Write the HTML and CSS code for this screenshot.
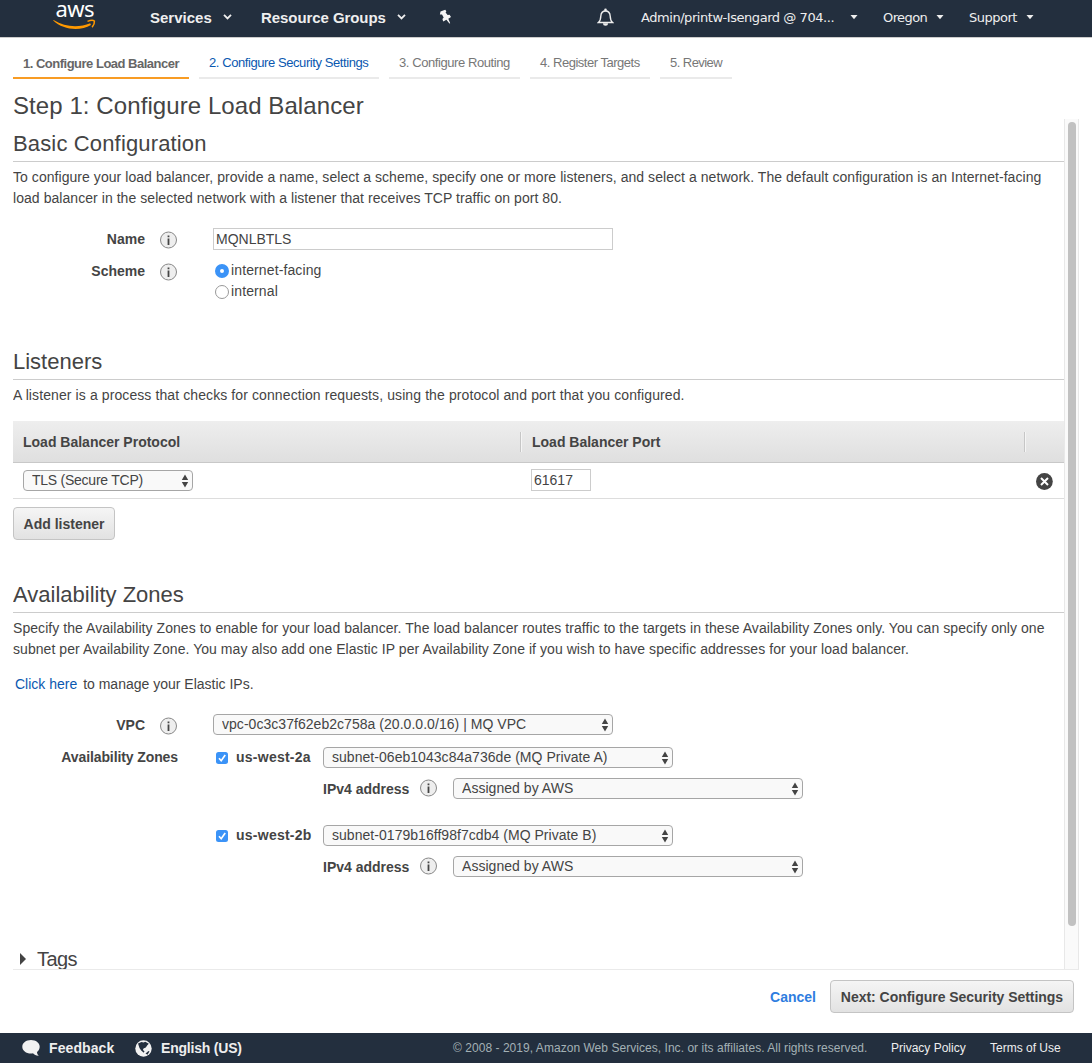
FILE: index.html
```
<!DOCTYPE html>
<html lang="en">
<head>
  <meta charset="UTF-8">
  <title>Create Load Balancer</title>
  <link rel="stylesheet" href="styles.css">
</head>
<body>

<!-- shared icons -->
<svg class="defs" width="0" height="0">
  <symbol id="info" viewBox="0 0 18 18">
    <circle cx="8.500" cy="9" r="8" fill="#eee" stroke="#888" stroke-width="1"/>
    <path d="M7.600 4.400h1.800v1.800H7.600zM7.600 7.400h1.800v6.600H7.600z" fill="#444"/>
  </symbol>
  <symbol id="arrows" viewBox="0 0 8 14">
    <path d="M4 .5L7.2 6H.8zM4 13.5L.8 8h6.4z" fill="#444"/>
  </symbol>
</svg>

<header class="topbar">
  <svg class="aws" width="46" height="34" viewBox="0 0 46 34">
    <text class="aws-text" x="2.500" y="17.200">aws</text>
    <path d="M.2 20.500C10 30 27 31.500 38 25l-.8-1.800C26 28 12 27.300.6 20z" fill="#f90"/>
    <path d="M34.500 21.400c2.500-1 5.800-1.200 6.900-.4.3 2-.9 4.500-2.300 6.300" fill="none" stroke="#f90" stroke-width="1.500"/>
  </svg>
  <span class="menu services">Services</span>
  <svg class="caret thin" width="9" height="6" viewBox="0 0 9 6"><path d="M1 .8l3.500 3.600L8 .8" fill="none" stroke="#eee" stroke-width="1.8"/></svg>
  <span class="menu groups">Resource Groups</span>
  <svg class="caret thin" width="9" height="6" viewBox="0 0 9 6"><path d="M1 .8l3.500 3.600L8 .8" fill="none" stroke="#eee" stroke-width="1.8"/></svg>
  <svg class="pin" width="13" height="16" viewBox="0 0 13 16"><path d="M1.500 2.500L6.200.8l1.200 1.500-.8 1.200 2 2.500 2-.2 1.400 2.200-2.700 1.800 1.900 4.400-.8.300-3-3.800-3.200 1.700-.8-2.300 1.300-1.600L3 5.500.9 5.400z" fill="#f5f5f5"/></svg>
  <svg class="bell" width="17" height="19" viewBox="0 0 17 19">
    <path d="M1.400 14.500c2-1.600 2.300-3.400 2.400-6.300C4 5 5.700 3 8.500 3s4.500 2 4.700 5.200c.1 2.900.4 4.700 2.400 6.300z" fill="none" stroke="#eee" stroke-width="1.400"/>
    <circle cx="8.500" cy="1.900" r="1.300" fill="#eee"/><path d="M6 15.300h5a2.500 2.500 0 0 1-5 0" fill="#eee"/>
  </svg>
  <span class="account user">Admin/printw-Isengard @ 704...</span>
  <svg class="caret" width="8" height="5" viewBox="0 0 8 5"><path d="M.5 0h7L4 4.200z" fill="#eee"/></svg>
  <span class="account region">Oregon</span>
  <svg class="caret" width="8" height="5" viewBox="0 0 8 5"><path d="M.5 0h7L4 4.200z" fill="#eee"/></svg>
  <span class="account support">Support</span>
  <svg class="caret" width="8" height="5" viewBox="0 0 8 5"><path d="M.5 0h7L4 4.200z" fill="#eee"/></svg>
</header>

<nav class="steps">
  <span class="step step-1 active">1. Configure Load Balancer</span>
  <a class="step step-2 link">2. Configure Security Settings</a>
  <span class="step step-3">3. Configure Routing</span>
  <span class="step step-4">4. Register Targets</span>
  <span class="step step-5">5. Review</span>
</nav>

<h1>Step 1: Configure Load Balancer</h1>

<main class="wizard">
  <div class="panel">
    <section class="basic">
      <h2>Basic Configuration</h2>
      <p class="desc">To configure your load balancer, provide a name, select a scheme, specify one or more listeners, and select a network. The default configuration is an Internet-facing<br>load balancer in the selected network with a listener that receives TCP traffic on port 80.</p>
      <div class="row name-row">
        <label>Name</label>
        <svg class="info" width="18" height="18"><use href="#info"/></svg>
        <input class="text name-input" type="text" value="MQNLBTLS">
      </div>
      <div class="row scheme-row">
        <label>Scheme</label>
        <svg class="info" width="18" height="18"><use href="#info"/></svg>
        <div class="radios">
          <div class="radio"><i class="dot on"></i>internet-facing</div>
          <div class="radio"><i class="dot"></i>internal</div>
        </div>
      </div>
    </section>

    <section class="listeners">
      <h2>Listeners</h2>
      <p class="desc">A listener is a process that checks for connection requests, using the protocol and port that you configured.</p>
      <div class="table">
        <div class="thead">
          <span>Load Balancer Protocol</span>
          <span class="sep">Load Balancer Port</span>
          <span class="sep"></span>
        </div>
        <div class="trow">
          <div class="select w170"><select class="protocol"><option>TLS (Secure TCP)</option></select><svg width="8" height="14"><use href="#arrows"/></svg></div>
          <input class="text port" type="text" value="61617">
          <svg class="remove" width="18" height="18" viewBox="0 0 18 18"><circle cx="9.400" cy="9.500" r="8.400" fill="#444"/><path d="M6 6l7 7m0-7l-7 7" stroke="#fff" stroke-width="2"/></svg>
        </div>
      </div>
      <button class="btn add">Add listener</button>
    </section>

    <section class="zones">
      <h2>Availability Zones</h2>
      <p class="desc">Specify the Availability Zones to enable for your load balancer. The load balancer routes traffic to the targets in these Availability Zones only. You can specify only one<br>subnet per Availability Zone. You may also add one Elastic IP per Availability Zone if you wish to have specific addresses for your load balancer.</p>
      <p class="eip"><a class="link">Click here</a> to manage your Elastic IPs.</p>
      <div class="row vpc-row">
        <label>VPC</label>
        <svg class="info" width="18" height="18"><use href="#info"/></svg>
        <div class="select w400"><select class="vpc"><option>vpc-0c3c37f62eb2c758a (20.0.0.0/16) | MQ VPC</option></select><svg width="8" height="14"><use href="#arrows"/></svg></div>
      </div>
      <div class="row zone-row">
        <label class="wide">Availability Zones</label>
        <div class="zone-list">
          <div class="zone">
            <svg class="check" width="12" height="12" viewBox="0 0 12 12"><rect width="12" height="12" rx="2.500" fill="#3b93f7"/><path d="M3 6.200l2.200 2.500L9.200 3" fill="none" stroke="#fff" stroke-width="1.700"/></svg>
            <b class="zone-name">us-west-2a</b>
            <div class="select w350"><select><option>subnet-06eb1043c84a736de (MQ Private A)</option></select><svg width="8" height="14"><use href="#arrows"/></svg></div>
          </div>
          <div class="ip">
            <b>IPv4 address</b>
            <svg class="ip-info" width="18" height="18"><use href="#info"/></svg>
            <div class="select w350"><select><option>Assigned by AWS</option></select><svg width="8" height="14"><use href="#arrows"/></svg></div>
          </div>
          <div class="zone">
            <svg class="check" width="12" height="12" viewBox="0 0 12 12"><rect width="12" height="12" rx="2.500" fill="#3b93f7"/><path d="M3 6.200l2.200 2.500L9.200 3" fill="none" stroke="#fff" stroke-width="1.700"/></svg>
            <b class="zone-name">us-west-2b</b>
            <div class="select w350"><select><option>subnet-0179b16ff98f7cdb4 (MQ Private B)</option></select><svg width="8" height="14"><use href="#arrows"/></svg></div>
          </div>
          <div class="ip">
            <b>IPv4 address</b>
            <svg class="ip-info" width="18" height="18"><use href="#info"/></svg>
            <div class="select w350"><select><option>Assigned by AWS</option></select><svg width="8" height="14"><use href="#arrows"/></svg></div>
          </div>
        </div>
      </div>
    </section>

    <div class="tags">
      <svg width="7" height="12" viewBox="0 0 7 12"><path d="M0 0l6 6-6 6z" fill="#444"/></svg>
      <span>Tags</span>
    </div>
  </div>
  <div class="track"><div class="thumb"></div></div>
</main>

<div class="actions">
  <a class="cancel">Cancel</a>
  <button class="btn next">Next: Configure Security Settings</button>
</div>

<footer class="footer">
  <svg width="18" height="17" viewBox="0 0 18 17"><path d="M9 0c5 0 8.700 2.900 8.700 6.700 0 2.300-1.100 4-2.700 5.200.1 1.700.7 2.900 1.800 3.800-2.500.1-4.500-.8-5.800-2.400-.6.100-1.300.2-2 .2C4 13.500.3 10.500.3 6.700.3 2.900 4 0 9 0z" fill="#f2f2f2"/></svg>
  <b class="feedback">Feedback</b>
  <svg width="17" height="17" viewBox="0 0 17 17"><circle cx="8.500" cy="8.500" r="8.200" fill="#f2f2f2"/><path d="M3 3.500L6.500 2l2 .6 1.800-.8 3.500 2-1.500 1.500-1.500 2.300-2.300 1-.6 1.500 1.600 1.200-.8 1.500-2.500-2.300L4.500 8z" fill="#232f3e"/><path d="M10.500 13.500l3-2.500 1 .5-2 3.300z" fill="#232f3e"/></svg>
  <b class="language">English (US)</b>
  <span class="copy">© 2008 - 2019, Amazon Web Services, Inc. or its affiliates. All rights reserved.</span>
  <span class="privacy">Privacy Policy</span>
  <span class="terms">Terms of Use</span>
</footer>

</body>
</html>
```
FILE: styles.css
```
* {
  box-sizing: border-box;
}

body {
  margin: 0;
  height: 1063px;
  overflow: hidden;
  display: flex;
  flex-direction: column;
  background: #fff;
  color: #444;
  font: 14px/21px "Liberation Sans", Arial, sans-serif;
  white-space: nowrap;
}

svg {
  flex: none;
}

.defs {
  display: none;
}

.link {
  color: #0a58b0;
}

/* top navigation */
.topbar {
  display: flex;
  align-items: center;
  flex: none;
  height: 38px;
  padding: 0 0 3px 53px;
  background: #232f3e;
  border-bottom: 1px solid #ccc;
  color: #eee;
}

.aws {
  overflow: visible;
}

.aws-text {
  font: 22px "Noto Sans", sans-serif;
  letter-spacing: -0.6px;
  fill: #fff;
}

.menu {
  font-size: 15px;
  font-weight: bold;
}

.services {
  width: 63px;
  margin-left: 51px;
}

.groups {
  width: 126px;
  margin-left: 28px;
  letter-spacing: -0.07px;
}

.caret.thin {
  margin-left: 10px;
}

.services + .caret {
  margin-right: 1px;
}

.pin {
  margin-left: 33px;
}

.bell {
  margin-left: 145px;
}

.account {
  font: 13px "DejaVu Sans", Verdana, sans-serif;
}

.user {
  width: 194px;
  margin-left: 27px;
  letter-spacing: -0.45px;
}

.region {
  width: 45px;
  margin-left: 25px;
  letter-spacing: -0.6px;
}

.support {
  width: 49px;
  margin-left: 25px;
  letter-spacing: -0.5px;
}

.caret {
  margin-left: 8px;
}

.user + .caret {
  margin-left: 15px;
}

/* wizard steps */
.steps {
  display: flex;
  gap: 10px;
  flex: none;
  height: 41px;
  padding-left: 13px;
}

.step {
  padding: 14px 0 0 10px;
  border-bottom: 2px solid #eaeaea;
  font-size: 13px;
  letter-spacing: -0.42px;
  color: #777;
}

.step.link {
  color: #0a58b0;
}

.step.active {
  padding-top: 15px;
  border-color: #f89c24;
  font-weight: bold;
  color: #666;
}

.step-1 {
  width: 176px;
  letter-spacing: -0.5px;
}

.step-2 {
  width: 180px;
}

.step-3 {
  width: 131px;
}

.step-4 {
  width: 120px;
  letter-spacing: -0.48px;
}

.step-5 {
  width: 72px;
  letter-spacing: -0.55px;
}

h1 {
  flex: none;
  height: 40px;
  margin: 0;
  padding: 12px 0 0 13px;
  font-size: 24px;
  font-weight: normal;
  line-height: 29px;
  letter-spacing: 0.08px;
}

.wizard {
  display: flex;
  flex: none;
  width: 1066px;
  height: 851px;
  margin-left: 13px;
  border-bottom: 1px solid #eaeaea;
}

.panel {
  flex: none;
  width: 1051px;
  overflow: hidden;
}

.track {
  width: 15px;
  padding: 3px 0 0 3px;
  background: #fafafa;
  border: solid #e8e8e8;
  border-width: 0 1px;
}

.thumb {
  width: 8px;
  height: 804px;
  border-radius: 4px;
  background: #c1c1c1;
}

section h2 {
  height: 43px;
  margin: 0;
  padding-top: 11px;
  border-bottom: 1px solid #ccc;
  font-size: 22px;
  font-weight: normal;
  line-height: 27px;
}

.basic {
  height: 218px;
}

.basic h2 {
  letter-spacing: 0.15px;
}

.listeners {
  height: 233px;
}

.zones {
  height: 370px;
}

.desc {
  margin: 5px 0 0;
  letter-spacing: 0.055px;
}

.listeners .desc {
  letter-spacing: 0.1px;
}

.row {
  display: flex;
}

label {
  width: 132px;
  font-weight: bold;
  text-align: right;
}

label.wide {
  width: 165px;
  letter-spacing: -0.1px;
}

.info {
  margin: 2px 35px 0 15px;
}

.text {
  height: 22px;
  padding: 0 2px;
  border: 1px solid #ccc;
  background: #fff;
  color: #444;
  font: inherit;
}

.name-row {
  margin-top: 19px;
}

.name-row label {
  margin-top: 1px;
}

.name-row .info {
  margin-top: 3px;
}

.name-input {
  width: 400px;
}

.scheme-row {
  margin-top: 11px;
}

.radio {
  display: flex;
  align-items: center;
  letter-spacing: 0.12px;
}

.radios {
  margin-top: -1px;
}

.dot {
  width: 14px;
  height: 14px;
  margin: 1px 2px 0;
  border: 1px solid #999;
  border-radius: 50%;
}

.dot.on {
  border: 5px solid #3b93f7;
  background: #fff;
}

/* listeners table */
.table {
  margin-top: 15px;
}

.thead {
  display: grid;
  grid-template-columns: 497px 504px 1fr;
  align-items: center;
  height: 42px;
  padding-left: 10px;
  background: linear-gradient(#eee, #dfdfdf);
  border-bottom: 1px solid #c8c8c8;
  font-weight: bold;
}

.thead span {
  height: 20px;
}

.thead .sep {
  padding-left: 11px;
  border-left: 1px solid #c6c6c6;
  box-shadow: inset 1px 0 #f5f5f5;
}

.trow {
  display: flex;
  align-items: center;
  height: 36px;
  padding-left: 10px;
  border-bottom: 1px solid #ddd;
}

.port {
  width: 60px;
  margin: 0 0 2px 338px;
}

.remove {
  margin: 1px 0 0 444px;
}

.select {
  display: grid;
  align-items: center;
  flex: none;
}

.select select,
.select svg {
  grid-area: 1 / 1;
}

.select svg {
  justify-self: end;
  margin-right: 4px;
  pointer-events: none;
}

.select select {
  width: 100%;
  height: 21px;
  padding: 0 20px 1px 8px;
  appearance: none;
  border: 1px solid #a6a6a6;
  border-radius: 4px;
  background: #f9f9f9;
  color: #444;
  font: inherit;
  line-height: 18px;
  letter-spacing: 0.04px;
}

.select .protocol {
  letter-spacing: -0.25px;
}

.w170 {
  width: 170px;
}

.w350 {
  width: 350px;
}

.w400 {
  width: 400px;
}

.btn {
  height: 33px;
  padding: 0;
  border: 1px solid #c4c4c4;
  border-radius: 4px;
  background: linear-gradient(#f5f5f5, #e2e2e2);
  color: #444;
  font: bold 14px "Liberation Sans", Arial, sans-serif;
}

.add {
  width: 102px;
  margin-top: 8px;
}

/* availability zones */
.eip {
  margin: 14px 0 0 2px;
}

.eip .link {
  margin-right: 2px;
}

.vpc-row {
  align-items: flex-start;
  margin-top: 19px;
}

.vpc-row label {
  margin-top: 1px;
}

.vpc-row .info {
  margin-top: 3px;
}

.zone-row {
  margin-top: 11px;
}

.zone-list {
  margin-left: 38px;
}

.zone,
.ip {
  display: flex;
  align-items: center;
  height: 21px;
}

.check {
  margin-top: 1px;
}

.zone-name {
  width: 87px;
  margin-left: 8px;
  letter-spacing: 0.25px;
}

.ip {
  margin: 10px 0 26px 107px;
}

.ip b {
  width: 97px;
  padding-top: 1px;
}

.ip-info {
  margin-bottom: 2px;
}

.ip .select {
  margin-left: 15px;
}

.tags {
  display: flex;
  align-items: center;
  gap: 10px;
  height: 34px;
  margin-top: 2px;
  padding-left: 7px;
  font-size: 20px;
  letter-spacing: -0.6px;
}

.actions {
  display: flex;
  align-items: center;
  justify-content: flex-end;
  flex: none;
  height: 63px;
  padding: 0 18px 10px 0;
}

.cancel {
  margin: 1px 14px 0 0;
  color: #2e7de0;
  font-weight: bold;
}

.next {
  width: 244px;
  letter-spacing: -0.03px;
}

.footer {
  display: flex;
  align-items: center;
  flex: none;
  height: 30px;
  padding-left: 22px;
  background: #232f3e;
  color: #eee;
  font-size: 12px;
}

.footer b {
  font-size: 14px;
}

.feedback {
  width: 66px;
  margin: 0 20px 0 9px;
  letter-spacing: 0.1px;
}

.language {
  width: 82px;
  margin-left: 9px;
  letter-spacing: -0.2px;
}

.copy {
  width: 415px;
  margin-left: 210px;
  letter-spacing: 0.04px;
  color: #a3b1b5;
}

.privacy {
  width: 76px;
  margin-left: 23px;
}

.terms {
  margin-left: 23px;
}
```
